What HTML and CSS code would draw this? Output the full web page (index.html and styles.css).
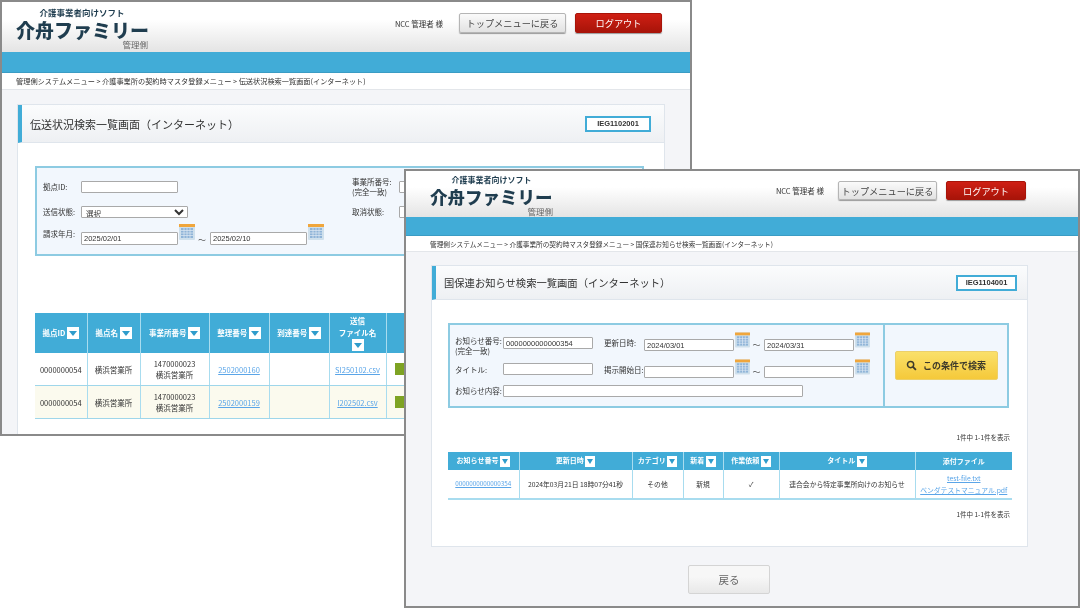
FILE: index.html
```html
<!DOCTYPE html>
<html lang="ja">
<head>
  <meta charset="UTF-8" />
  <title>介舟ファミリー 管理側</title>
  <link rel="stylesheet" href="styles.css">
</head>
<body>

  <svg class="defs" width="0" height="0">
    <symbol id="cal" viewBox="0 0 16 16">
      <rect x="0" y="0" width="16" height="16" rx="1" fill="#cfe0ec"/>
      <rect x="0" y="0" width="16" height="3" fill="#f0a63c"/>
      <rect x="2" y="4" width="12" height="10" fill="#8fb4d8"/>
      <path d="M2 6.5h12M2 9h12M2 11.5h12M5 4v10M8 4v10M11 4v10" stroke="#dfeaf4" stroke-width=".7"/>
    </symbol>
  </svg>

  <!-- back window -->
  <div class="win win-a">
    <header class="top">
      <div class="logo">
        <div class="logo-sub">介護事業者向けソフト</div>
        <div class="logo-main">介舟ファミリー</div>
        <div class="logo-side">管理側</div>
      </div>
      <div class="actions">
        <div class="user">NCC 管理者 様</div>
        <button class="btn-top">トップメニューに戻る</button>
        <button class="btn-logout">ログアウト</button>
      </div>
    </header>
    <div class="band"></div>
    <div class="crumb">管理側システムメニュー &gt; 介護事業所の契約時マスタ登録メニュー &gt; 伝送状況検索一覧画面(インターネット)</div>
    <div class="content">
      <section class="panel">
        <div class="panel-title">
          <h2>伝送状況検索一覧画面（インターネット）</h2>
          <span class="code">IEG1102001</span>
        </div>
        <div class="panel-body">
          <div class="search search-a">
            <div class="row row-1">
              <label class="lbl">拠点ID:</label>
              <input class="inp" type="text">
              <label class="lbl lbl-2">事業所番号:<br>(完全一致)</label>
              <input class="inp" type="text">
            </div>
            <div class="row row-2">
              <label class="lbl">送信状態:</label>
              <select class="sel"><option>選択</option></select>
              <label class="lbl lbl-2">取消状態:</label>
              <select class="sel"><option>選択</option></select>
            </div>
            <div class="row row-3">
              <label class="lbl">請求年月:</label>
              <input class="inp date" type="text" value="2025/02/01">
              <svg class="cal"><use href="#cal"/></svg>
              <span class="tilde">～</span>
              <input class="inp date" type="text" value="2025/02/10">
              <svg class="cal"><use href="#cal"/></svg>
            </div>
          </div>

          <table class="list list-a">
            <colgroup>
              <col class="a1"><col class="a2"><col class="a3"><col class="a4"><col class="a5"><col class="a6"><col>
            </colgroup>
            <thead>
              <tr>
                <th>拠点ID <i class="sort"></i></th>
                <th>拠点名 <i class="sort"></i></th>
                <th>事業所番号 <i class="sort"></i></th>
                <th>整理番号 <i class="sort"></i></th>
                <th>到達番号 <i class="sort"></i></th>
                <th>送信<br>ファイル名<br><i class="sort"></i></th>
                <th></th>
              </tr>
            </thead>
            <tbody>
              <tr>
                <td>0000000054</td>
                <td>横浜営業所</td>
                <td>1470000023<br>横浜営業所</td>
                <td><a href="#">2502000160</a></td>
                <td></td>
                <td><a href="#">SI250102.csv</a></td>
                <td class="status"><span class="chip"></span></td>
              </tr>
              <tr class="alt">
                <td>0000000054</td>
                <td>横浜営業所</td>
                <td>1470000023<br>横浜営業所</td>
                <td><a href="#">2502000159</a></td>
                <td></td>
                <td><a href="#">I202502.csv</a></td>
                <td class="status"><span class="chip"></span></td>
              </tr>
            </tbody>
          </table>
        </div>
      </section>
    </div>
  </div>

  <!-- front window -->
  <div class="win win-b">
    <header class="top">
      <div class="logo">
        <div class="logo-sub">介護事業者向けソフト</div>
        <div class="logo-main">介舟ファミリー</div>
        <div class="logo-side">管理側</div>
      </div>
      <div class="actions">
        <div class="user">NCC 管理者 様</div>
        <button class="btn-top">トップメニューに戻る</button>
        <button class="btn-logout">ログアウト</button>
      </div>
    </header>
    <div class="band"></div>
    <div class="crumb">管理側システムメニュー &gt; 介護事業所の契約時マスタ登録メニュー &gt; 国保連お知らせ検索一覧画面(インターネット)</div>
    <div class="content">
      <section class="panel">
        <div class="panel-title">
          <h2>国保連お知らせ検索一覧画面（インターネット）</h2>
          <span class="code">IEG1104001</span>
        </div>
        <div class="panel-body">
          <div class="search search-b">
            <div class="fields">
              <div class="row row-1">
                <label class="lbl">お知らせ番号:<br>(完全一致)</label>
                <input class="inp wide" type="text" value="0000000000000354">
                <label class="lbl lbl-2">更新日時:</label>
                <input class="inp date" type="text" value="2024/03/01">
                <svg class="cal"><use href="#cal"/></svg>
                <span class="tilde">～</span>
                <input class="inp date" type="text" value="2024/03/31">
                <svg class="cal"><use href="#cal"/></svg>
              </div>
              <div class="row row-2">
                <label class="lbl">タイトル:</label>
                <input class="inp wide" type="text">
                <label class="lbl lbl-2">掲示開始日:</label>
                <input class="inp date" type="text">
                <svg class="cal"><use href="#cal"/></svg>
                <span class="tilde">～</span>
                <input class="inp date" type="text">
                <svg class="cal"><use href="#cal"/></svg>
              </div>
              <div class="row row-3">
                <label class="lbl">お知らせ内容:</label>
                <input class="inp full" type="text">
              </div>
            </div>
            <div class="action">
              <button class="btn-search">
                <svg class="glass" viewBox="0 0 12 12"><circle cx="5" cy="5" r="3.4" fill="none" stroke="#3d3a2a" stroke-width="1.6"/><path d="M7.6 7.6l3.2 3.2" stroke="#3d3a2a" stroke-width="2"/></svg>
                この条件で検索
              </button>
            </div>
          </div>

          <p class="count">1件中 1-1件を表示</p>

          <table class="list list-b">
            <colgroup>
              <col class="b1"><col class="b2"><col class="b3"><col class="b4"><col class="b5"><col class="b6"><col>
            </colgroup>
            <thead>
              <tr>
                <th>お知らせ番号 <i class="sort"></i></th>
                <th>更新日時 <i class="sort"></i></th>
                <th>カテゴリ <i class="sort"></i></th>
                <th>新着 <i class="sort"></i></th>
                <th>作業依頼 <i class="sort"></i></th>
                <th>タイトル <i class="sort"></i></th>
                <th>添付ファイル</th>
              </tr>
            </thead>
            <tbody>
              <tr>
                <td class="num"><a href="#">0000000000000354</a></td>
                <td>2024年03月21日 18時07分41秒</td>
                <td>その他</td>
                <td>新規</td>
                <td>✓</td>
                <td>連合会から特定事業所向けのお知らせ</td>
                <td><a href="#">test-file.txt</a><br><a href="#">ベンダテストマニュアル.pdf</a></td>
              </tr>
            </tbody>
          </table>

          <p class="count count-end">1件中 1-1件を表示</p>
        </div>
      </section>
      <button class="btn-back">戻る</button>
    </div>
  </div>

</body>
</html>
```

FILE: styles.css
```css
body {
  margin: 0;
  width: 1080px;
  height: 608px;
  position: relative;
  overflow: hidden;
  background: #fff;
  font-family: "Noto Sans CJK JP", "Liberation Sans", sans-serif;
  color: #333;
}

.defs {
  position: absolute;
}

/* windows on the canvas */
.win {
  position: absolute;
  box-sizing: border-box;
  border: 2px solid #8a8a8a;
  overflow: hidden;
  background: #f4f5f8;
  filter: blur(0.35px);
}

.win-a {
  left: 0;
  top: 0;
  width: 692px;
  height: 436px;
}

.win-b {
  left: 404px;
  top: 169px;
  width: 676px;
  height: 439px;
}

/* header */
.top {
  display: flex;
  justify-content: space-between;
  align-items: flex-start;
  box-sizing: border-box;
  background: linear-gradient(#fff 35%, #e4e4e4);
}

.win-a .top {
  height: 50px;
  padding: 5px 28px 0 14px;
}

.win-b .top {
  height: 46px;
  padding: 4px 52px 0 24px;
}

.logo {
  display: flex;
  flex-direction: column;
  color: #1f3d4f;
}

.win-a .logo {
  width: 132px;
}

.win-b .logo {
  width: 123px;
}

.logo-sub {
  font-weight: 700;
  text-align: center;
  white-space: nowrap;
}

.win-a .logo-sub {
  font-size: 8.5px;
  line-height: 10px;
  margin-bottom: 2px;
}

.win-b .logo-sub {
  font-size: 8px;
  line-height: 10px;
  margin-bottom: 2px;
}

.logo-main {
  font-weight: 900;
  white-space: nowrap;
}

.win-a .logo-main {
  font-size: 19px;
  line-height: 21px;
}

.win-b .logo-main {
  font-size: 17.5px;
  line-height: 20px;
}

.logo-side {
  font-size: 8.5px;
  line-height: 9px;
  text-align: right;
  color: #666;
  white-space: nowrap;
}

.actions {
  display: flex;
  align-items: center;
}

.win-a .actions {
  margin-top: 6px;
}

.win-b .actions {
  margin-top: 6px;
}

.user {
  font-size: 7.5px;
  white-space: nowrap;
}

.btn-top,
.btn-logout {
  font-family: inherit;
  font-size: 9.2px;
  border-radius: 2px;
  padding: 0;
  height: 20px;
  cursor: pointer;
}

.btn-top {
  color: #444;
  background: linear-gradient(#fafafa, #e2e2e2);
  border: 1px solid #b5b5b5;
  box-shadow: 0 1px 1px #999;
}

.btn-logout {
  color: #fff;
  background: linear-gradient(#cf1f14, #a81409);
  border: 1px solid #a81409;
  box-shadow: 0 1px 1px #999;
  margin-left: 9px;
}

.win-a .btn-top {
  width: 107px;
  margin-left: 16px;
}

.win-a .btn-logout {
  width: 87px;
}

.win-b .btn-top {
  width: 99px;
  height: 19px;
  margin-left: 14px;
}

.win-b .btn-logout {
  width: 80px;
  height: 19px;
}

.band {
  background: #41acd7;
  border-bottom: 1px solid #3a9cc4;
}

.win-a .band {
  height: 20px;
}

.win-b .band {
  height: 18px;
}

.crumb {
  background: #fff;
  border-bottom: 1px solid #e3e6ea;
  white-space: nowrap;
}

.win-a .crumb {
  height: 16px;
  line-height: 17px;
  padding-left: 14px;
  font-size: 7.2px;
}

.win-b .crumb {
  height: 15px;
  line-height: 16px;
  padding-left: 24px;
  font-size: 6.65px;
}

/* panel */
.content {
  overflow: hidden;
}

.win-a .content {
  padding: 14px 0 0 15px;
}

.win-b .content {
  padding: 13px 0 0 25px;
}

.panel {
  box-sizing: border-box;
  background: #fff;
  border: 1px solid #dfe5ec;
}

.win-a .panel {
  width: 648px;
  height: 340px;
}

.win-b .panel {
  width: 597px;
  height: 282px;
}

.panel-title {
  display: flex;
  align-items: center;
  justify-content: space-between;
  box-sizing: border-box;
  background: linear-gradient(#fbfcfd, #eef0f3);
  border-bottom: 1px solid #dfe5ec;
  border-left: 4px solid #41acd7;
  background-clip: padding-box;
}

.win-a .panel-title {
  height: 38px;
  padding: 0 13px 0 8px;
}

.win-b .panel-title {
  height: 34px;
  padding: 0 10px 0 8px;
}

.panel-title h2 {
  margin: 0;
  font-weight: 400;
  color: #333;
  white-space: nowrap;
}

.win-a .panel-title h2 {
  font-size: 11px;
}

.win-b .panel-title h2 {
  font-size: 10.3px;
}

.code {
  background: #fff;
  border: 2px solid #41acd7;
  font-family: "Liberation Sans", sans-serif;
  font-size: 7.5px;
  font-weight: 700;
  text-align: center;
  line-height: 12px;
  width: 62px;
}

.win-b .code {
  width: 57px;
}

.panel-body {
  padding-top: 23px;
}

.win-a .panel-body {
  padding-left: 17px;
}

.win-b .panel-body {
  padding-left: 16px;
}

/* search box */
.search {
  box-sizing: border-box;
  background: #f2f7fd;
  border: 2px solid #8dcbe2;
}

.search-a {
  width: 609px;
  height: 90px;
  padding: 12px 0 0 6px;
}

.search-b {
  display: flex;
  width: 561px;
  height: 85px;
}

.fields {
  box-sizing: border-box;
  width: 435px;
  padding: 7px 0 0 5px;
  border-right: 2px solid #8dcbe2;
}

.action {
  flex: 1;
  display: flex;
  align-items: center;
  justify-content: center;
}

.row {
  display: flex;
}

.lbl {
  flex: none;
  font-size: 7.5px;
  line-height: 10px;
  white-space: nowrap;
}

.inp,
.sel {
  flex: none;
  box-sizing: border-box;
  margin: 0;
  padding: 0 2px;
  background: #fff;
  border: 1px solid #a9a9a9;
  border-radius: 1px;
  font-family: "Liberation Sans", sans-serif;
  font-size: 7.5px;
  color: #333;
}

.cal {
  flex: none;
}

.tilde {
  flex: none;
  font-size: 8px;
  color: #555;
}

/* back window form */
.search-a .lbl {
  width: 38px;
}

.search-a .inp {
  width: 97px;
  height: 12px;
}

.search-a .sel {
  width: 107px;
  height: 12px;
  padding: 0;
  line-height: 10px;
  font-family: inherit;
}

.search-a .row-1 {
  height: 13px;
  margin-bottom: 12px;
  align-items: center;
}

.search-a .row-1 .lbl-2 {
  margin-left: 174px;
  width: 47px;
}

.search-a .row-2 {
  height: 13px;
  margin-bottom: 6px;
  align-items: center;
}

.search-a .row-2 .lbl-2 {
  margin-left: 164px;
  width: 47px;
}

.search-a .row-3 {
  height: 21px;
  align-items: flex-end;
}

.search-a .row-3 .lbl {
  align-self: flex-start;
  margin-top: 5px;
}

.search-a .date {
  height: 13px;
}

.search-a .cal {
  width: 16px;
  height: 16px;
  margin-left: 1px;
  align-self: flex-start;
}

.search-a .tilde {
  width: 14px;
  text-align: center;
  margin-right: 1px;
}

/* front window form */
.search-b .lbl {
  width: 48px;
}

.search-b .lbl-2 {
  width: 40px;
  margin-left: 11px;
}

.search-b .row {
  align-items: flex-start;
}

.search-b .wide {
  width: 90px;
  height: 12px;
  margin-top: 5px;
}

.search-b .date {
  width: 90px;
  height: 12px;
  margin-top: 7px;
}

.search-b .cal {
  width: 15px;
  height: 16px;
  margin-left: 1px;
}

.search-b .tilde {
  width: 13px;
  margin-top: 7px;
  text-align: center;
  margin-right: 1px;
}

.search-b .lbl-2 {
  margin-top: 6px;
}

.search-b .row-1 {
  height: 19px;
  margin-bottom: 8px;
}

.search-b .row-1 > .lbl:first-child {
  margin-top: 4px;
}

.search-b .row-2 {
  height: 19px;
  margin-bottom: 7px;
}

.search-b .row-2 > .lbl:first-child {
  margin-top: 6px;
}

.search-b .row-2 .wide {
  margin-top: 4px;
}

.search-b .row-3 {
  align-items: center;
}

.search-b .full {
  width: 300px;
  height: 12px;
}

.btn-search {
  display: flex;
  align-items: center;
  justify-content: center;
  gap: 6px;
  width: 103px;
  height: 29px;
  padding: 0;
  background: linear-gradient(#fae06a, #f5c93a);
  border: 1px solid #ecd06a;
  border-radius: 2px;
  font-family: inherit;
  font-size: 9px;
  font-weight: 700;
  color: #3d3a2a;
}

.glass {
  width: 11px;
  height: 11px;
}

.count {
  margin: 0;
  width: 562px;
  font-size: 6.5px;
  line-height: 10px;
  text-align: right;
  color: #333;
}

.search-b + .count {
  margin: 24px 0 10px;
}

.count-end {
  margin-top: 9px;
}

/* tables */
.list {
  border-collapse: collapse;
  table-layout: fixed;
}

.list th {
  padding: 0;
  background: #41acd7;
  color: #fff;
  font-weight: 700;
  border-left: 1px solid #a8dcef;
  text-align: center;
}

.list td {
  padding: 0;
  text-align: center;
  border-left: 1px solid #a8dcef;
  border-bottom: 1px solid #9fd6ea;
}

.list th:first-child,
.list td:first-child {
  border-left: none;
}

.list a {
  color: #5aa5e8;
}

.alt td {
  background: #fbfaee;
}

.sort {
  display: inline-flex;
  align-items: center;
  justify-content: center;
  vertical-align: middle;
  background: #fff;
}

.sort::after {
  content: "";
  border-style: solid;
  border-color: #2f9ccb transparent transparent;
}

.list-a {
  width: 608px;
  margin-top: 57px;
}

.list-a th {
  height: 40px;
  font-size: 7.5px;
  line-height: 12px;
}

.list-a td {
  height: 32px;
  font-size: 7.5px;
  line-height: 11px;
}

.list-a .sort {
  width: 12px;
  height: 12px;
}

.list-a .sort::after {
  border-width: 5px 4px 0;
}

.a1 { width: 52px; }
.a2 { width: 53px; }
.a3 { width: 69px; }
.a4 { width: 60px; }
.a5 { width: 60px; }
.a6 { width: 57px; }

.list-a .status {
  text-align: left;
  padding-left: 8px;
}

.chip {
  display: block;
  width: 40px;
  height: 12px;
  background: #7ea323;
}

.list-b {
  width: 564px;
}

.list-b th {
  height: 18px;
  font-size: 7px;
  line-height: 10px;
}

.list-b td {
  height: 28px;
  font-size: 6.8px;
  line-height: 12px;
  border-bottom: 2px solid #a8dcef;
}

.list-b .num {
  font-size: 6.3px;
}

.list-b .sort {
  width: 10px;
  height: 11px;
}

.list-b .sort::after {
  border-width: 5px 3.5px 0;
}

.b1 { width: 71px; }
.b2 { width: 113px; }
.b3 { width: 51px; }
.b4 { width: 40px; }
.b5 { width: 56px; }
.b6 { width: 136px; }

.btn-back {
  display: block;
  width: 82px;
  height: 29px;
  margin: 18px 0 0 257px;
  padding: 0;
  background: linear-gradient(#f7f7f7 40%, #e8e8e8);
  border: 1px solid #d4d4d4;
  border-radius: 2px;
  font-family: inherit;
  font-size: 10.5px;
  color: #666;
}
```
